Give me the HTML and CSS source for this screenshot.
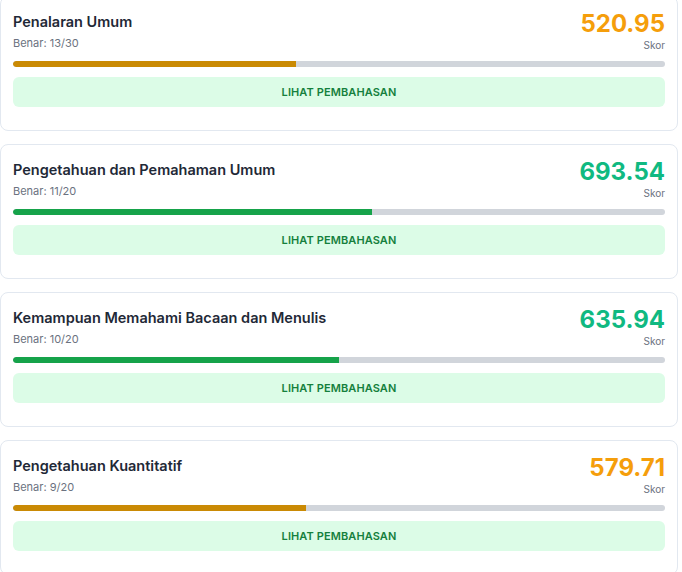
FILE: index.html
```html
<!DOCTYPE html>
<html lang="id">
<head>
<meta charset="utf-8">
<title>Hasil Subtes</title>
<link rel="stylesheet" href="styles.css">
</head>
<body>
<div class="list">
  <section class="card">
    <div class="head">
      <div class="info">
        <h3 class="title">Penalaran Umum</h3>
        <p class="meta">Benar: 13/30</p>
      </div>
      <div class="score">
        <span class="value mid">520.95</span>
        <span class="label">Skor</span>
      </div>
    </div>
    <div class="track"><div class="fill mid" style="width:43.33%"></div></div>
    <button class="btn">LIHAT PEMBAHASAN</button>
  </section>

  <section class="card">
    <div class="head">
      <div class="info">
        <h3 class="title">Pengetahuan dan Pemahaman Umum</h3>
        <p class="meta">Benar: 11/20</p>
      </div>
      <div class="score">
        <span class="value good">693.54</span>
        <span class="label">Skor</span>
      </div>
    </div>
    <div class="track"><div class="fill good" style="width:55%"></div></div>
    <button class="btn">LIHAT PEMBAHASAN</button>
  </section>

  <section class="card">
    <div class="head">
      <div class="info">
        <h3 class="title">Kemampuan Memahami Bacaan dan Menulis</h3>
        <p class="meta">Benar: 10/20</p>
      </div>
      <div class="score">
        <span class="value good">635.94</span>
        <span class="label">Skor</span>
      </div>
    </div>
    <div class="track"><div class="fill good" style="width:50%"></div></div>
    <button class="btn">LIHAT PEMBAHASAN</button>
  </section>

  <section class="card">
    <div class="head">
      <div class="info">
        <h3 class="title">Pengetahuan Kuantitatif</h3>
        <p class="meta">Benar: 9/20</p>
      </div>
      <div class="score">
        <span class="value mid">579.71</span>
        <span class="label">Skor</span>
      </div>
    </div>
    <div class="track"><div class="fill mid" style="width:45%"></div></div>
    <button class="btn">LIHAT PEMBAHASAN</button>
  </section>
</div>
</body>
</html>
```

FILE: styles.css
```css
* { box-sizing: border-box; }

html, body {
  margin: 0;
  padding: 0;
  background: #ffffff;
  font-family: Inter, "Noto Sans", "Liberation Sans", sans-serif;
  color: #1f2937;
}

.list {
  width: 678px;
  margin-top: -4px;
  display: flex;
  flex-direction: column;
  gap: 13px;
}

.card {
  border: 1px solid #e2e8f0;
  border-radius: 8px;
  padding: 12px 12px 23px 12px;
  background: #fff;
}

.head {
  display: flex;
  justify-content: space-between;
  align-items: flex-start;
}

.title {
  margin: 0;
  padding-top: 2px;
  font-size: 14.5px;
  line-height: 22px;
  font-weight: 600;
  color: #1f2937;
}

.meta {
  margin: 2px 0 0 0;
  font-size: 11px;
  line-height: 16px;
  color: #6b7280;
}

.score {
  display: flex;
  flex-direction: column;
  align-items: flex-end;
}

.value {
  font-size: 24px;
  line-height: 30px;
  font-weight: 700;
}

.value.mid { color: #f59e0b; }
.value.good { color: #10b981; }

.label {
  font-size: 10px;
  line-height: 12px;
  color: #6b7280;
}

.track {
  margin-top: 10px;
  height: 6px;
  border-radius: 3px;
  background: #d1d5db;
  overflow: hidden;
}

.fill { height: 100%; border-radius: 3px 0 0 3px; }
.fill.mid { background: #ca8a04; }
.fill.good { background: #16a34a; }

.btn {
  display: block;
  width: 100%;
  margin-top: 10px;
  height: 30px;
  border: 0;
  border-radius: 6px;
  background: #dcfce7;
  color: #15803d;
  font-family: inherit;
  font-size: 11px;
  font-weight: 600;
  letter-spacing: 0.1px;
}
```
